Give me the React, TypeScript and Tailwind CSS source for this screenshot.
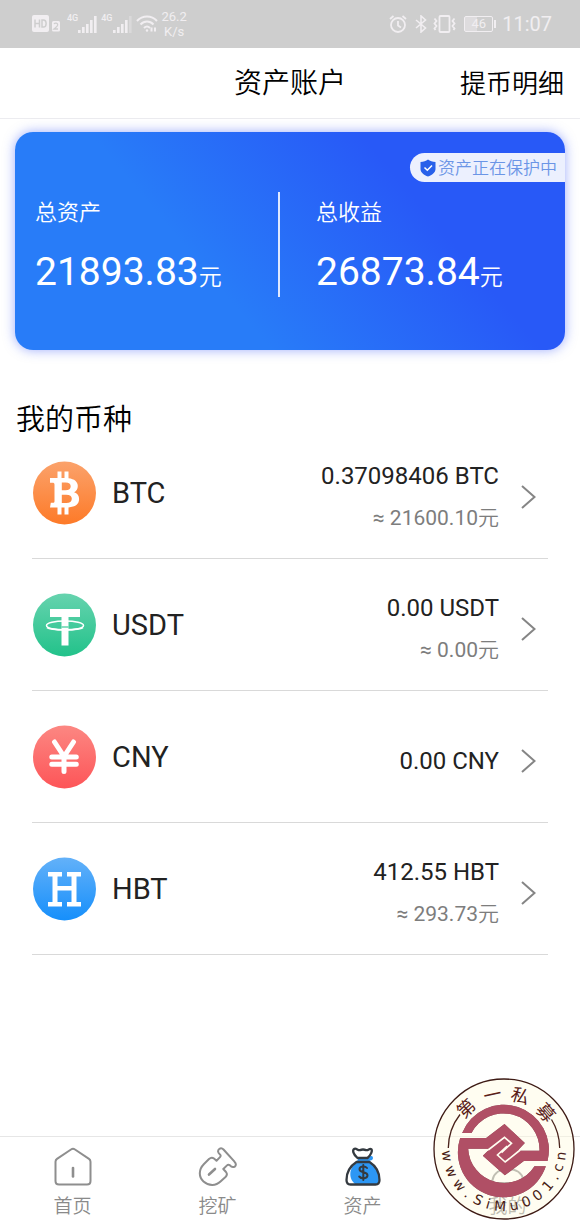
import React from "react";

type Coin = {
  name: string;
  amount: string;
  approx?: string;
  from: string;
  to: string;
  glyph: React.ReactNode;
};

const coins: Coin[] = [
  {
    name: "BTC",
    amount: "0.37098406 BTC",
    approx: "≈ 21600.10元",
    from: "#fba26b",
    to: "#fd7a28",
    glyph: (
      <path
        fill="#fff"
        fillRule="evenodd"
        d="M25.500 10.500h4V17h3v-6.500h4v6.700c6 .6 9.300 3.600 9.300 7.800 0 2.900-1.300 5-3.700 6.200 3.300 1.100 5 3.500 5 6.900 0 5.100-3.700 8-10.600 8.300V53.500h-4V46.500h-3v7h-4v-7H18l.8-4.700h2c1.200 0 1.700-.5 1.700-1.600V23.700c0-1.400-.6-2-2.100-2h-2.400V17h7.500zM29.800 21.500v7.700h3.700c3.500 0 5.200-1.300 5.200-3.900 0-2.500-1.700-3.800-5-3.800zM29.800 33.700V42h4.400c3.700 0 5.600-1.400 5.600-4.200 0-2.700-1.900-4.100-5.600-4.100z"
      />
    ),
  },
  {
    name: "USDT",
    amount: "0.00 USDT",
    approx: "≈ 0.00元",
    from: "#66d3ae",
    to: "#22c28a",
    glyph: (
      <>
        <path fill="#fff" d="M18 16h30v8H36.500v28.500h-7V24H18z" />
        <ellipse cx="33" cy="32.500" rx="18.500" ry="4.600" fill="none" stroke="#fff" strokeWidth="1.500" />
        <path d="M29.500 34h7" stroke="#3bc998" strokeWidth="1.200" />
        <path d="M15 34.500c4 3 32 3 36 0" fill="none" stroke="#fff" strokeWidth="1.600" />
      </>
    ),
  },
  {
    name: "CNY",
    amount: "0.00 CNY",
    from: "#fc8782",
    to: "#fd5558",
    glyph: (
      <path
        d="M22.500 17 32 31.500 41.500 17M32 31v15.500M19.800 32h24.500M19.800 39.300h24.500"
        fill="none"
        stroke="#fff"
        strokeWidth="5"
        strokeLinecap="round"
        strokeLinejoin="round"
      />
    ),
  },
  {
    name: "HBT",
    amount: "412.55 HBT",
    approx: "≈ 293.73元",
    from: "#63b1f9",
    to: "#168ffb",
    glyph: (
      <path
        fill="#fff"
        d="M16 15h14v4.500h-4.500v9.500h14v-9.500H35V15h14v4.500h-4.500V45H49v4.500H35V45h4.500V33.500h-14V45H30v4.500H16V45h4.500V19.500H16z"
      />
    ),
  },
];

function CoinIcon({ coin }: { coin: Coin }) {
  const id = `fill-${coin.name}`;
  return (
    <svg viewBox="0 0 64 64" className="size-16 shrink-0" aria-hidden="true">
      <defs>
        <linearGradient id={id} x1="0" y1="0" x2="0" y2="1">
          <stop offset="0" stopColor={coin.from} />
          <stop offset="1" stopColor={coin.to} />
        </linearGradient>
      </defs>
      <circle cx="32.500" cy="32" r="31.500" fill={`url(#${id})`} />
      {coin.glyph}
    </svg>
  );
}

function Bars({ last }: { last: number }) {
  return (
    <svg viewBox="0 0 19 18" className="h-[18px] w-[19px]" aria-hidden="true">
      {[3, 6, 9, 13, 17].map((h, i) => (
        <rect key={h} x={i * 4} y={18 - h} width="2.600" height={h} fill="#f1eef1" opacity={i < last ? 1 : 0.35} />
      ))}
    </svg>
  );
}

function StatusBar() {
  return (
    <div className="flex h-12 items-center justify-between bg-[#cecece] pl-8 pr-7 text-[#f1eef1]">
      <div className="flex items-center">
        <svg viewBox="0 0 29 18" className="h-[18px] w-[29px]" aria-hidden="true">
          <rect x="0" y="0" width="17" height="17" rx="2" fill="#f1eef1" />
          <path d="M3 4.500v8M7.500 4.500v8M3 8.500h4.500M10 5v7h1.500c3.500 0 3.500-7 0-7z" fill="none" stroke="#cecece" strokeWidth="1.500" />
          <rect x="20" y="6" width="8" height="10.500" rx="1.500" fill="#f1eef1" />
          <path d="M22 9c1-1.500 4-1 3.700 1-.2 1.500-2 2.500-3.700 4h4" fill="none" stroke="#cecece" strokeWidth="1.300" />
        </svg>
        <span className="ml-1.5 self-start pt-1 text-[9px] leading-[10px] font-medium">4G</span>
        <Bars last={5} />
        <span className="ml-1 self-start pt-1 text-[9px] leading-[10px] font-medium">4G</span>
        <Bars last={4} />
        <svg viewBox="0 0 22 18" className="ml-1 h-[18px] w-[22px]" fill="none" stroke="#f1eef1" strokeWidth="2" aria-hidden="true">
          <path d="M1 6c5.500-6 14.500-6 20 0M4.500 9.500c3.800-4 9.200-4 13 0M8 13c2-2 4-2 6 0" />
          <circle cx="11" cy="15.500" r="1.200" fill="#f1eef1" stroke="none" />
          <path d="M15.500 12.500v4M19 12.500v4" />
        </svg>
        <span className="ml-1 text-center text-[13px] leading-[15px]">
          26.2
          <br />
          K/s
        </span>
      </div>
      <div className="flex items-center">
        <svg viewBox="0 0 18 18" className="size-[18px]" fill="none" stroke="#f1eef1" strokeWidth="1.800" aria-hidden="true">
          <circle cx="9" cy="10" r="7" />
          <path d="M9 6v4.500l3 2M1 4l3.500-3M17 4l-3.500-3" />
        </svg>
        <svg viewBox="0 0 12 18" className="ml-2 h-[18px] w-3" fill="none" stroke="#f1eef1" strokeWidth="1.600" aria-hidden="true">
          <path d="M1 5l9.500 8L6 17V1l4.500 4L1 13" />
        </svg>
        <svg viewBox="0 0 23 18" className="ml-1.5 h-[18px] w-[23px]" fill="none" stroke="#f1eef1" strokeWidth="1.800" aria-hidden="true">
          <rect x="6.500" y="1" width="10" height="16" rx="1" />
          <path d="M1.500 3.500l2 2.500-2 2.500 2 2.500-2 2.500 1 1.500M21.500 3.500l-2 2.500 2 2.500-2 2.500 2 2.500-1 1.500" />
        </svg>
        <span className="ml-2 flex h-4 w-[29px] items-center justify-center rounded-xs border border-[#f1eef1] bg-[linear-gradient(90deg,#dedcde_46%,transparent_46%)] text-[13px] leading-4">
          46
        </span>
        <span className="ml-px h-2 w-0.5 bg-[#f1eef1]" />
        <span className="ml-1.5 text-xl leading-6">11:07</span>
      </div>
    </div>
  );
}

function Total({ label, value }: { label: string; value: string }) {
  return (
    <div>
      <p className="text-[22px] leading-8">{label}</p>
      <p className="mt-5 text-[39px] leading-[46px] whitespace-nowrap">
        {value}
        <span className="text-[23px]">元</span>
      </p>
    </div>
  );
}

const tabs = [
  {
    label: "首页",
    icon: (
      <g fill="none" stroke="#8e8e8e" strokeWidth="2" strokeLinejoin="round" strokeLinecap="round">
        <path d="M18 2.500q2-1.300 4 0l14 9.300q1.500 1 1.500 3V34q0 3.500-3.500 3.500H6q-3.500 0-3.500-3.500V14.800q0-2 1.500-3z" />
        <path d="M20 21v8.500" strokeWidth="2.600" />
      </g>
    ),
  },
  {
    label: "挖矿",
    icon: (
      <g fill="none" stroke="#8e8e8e" strokeWidth="2" strokeLinejoin="round" strokeLinecap="round">
        <path d="M21.500 1.800c-2.300 1.600-1.600 4 .5 5.700 1 .8.800 1.800 0 2.600l-3.500 3.600-2.500-2.200q-2.500-1.700-5 .5l-5 5C.500 22.500.500 30 5.500 34.500s12.500 4.500 17 0l5-4.500q2.500-2.500.5-5l-2.700-3 3.700-3.600q1.300-1.300 3 0c1.700 2 4.400 2.400 5.500.300q1-2-1-4L25.500 2.500q-2-2-4-.7z" />
        <path d="M11 27.500l6-5.500" strokeWidth="2.600" />
      </g>
    ),
  },
  {
    label: "资产",
    icon: (
      <g strokeLinejoin="round" strokeLinecap="round">
        <path d="M16 10l13-1q2 2 0 4l-3 1c6 3 10.500 12 10 20l-2 3.500H13c-8-5-7-17 0-21z" fill="#2c97f5" />
        <path d="M14.500 11C10 7 9 3 11.500 1.800c2-.8 3.500 2 5.500 1.300 2-.8 4-.8 6 0s3.500-2 5-1c2 1.200 0 6-3.500 8.900z" fill="#fff" />
        <path
          d="M14.500 11C10 7 9 3 11.500 1.800c2-.8 3.500 2 5.500 1.300 2-.8 4-.8 6 0s3.500-2 5-1c2 1.200 0 6-3.500 8.900zM13.500 15h13C32 18.500 36.500 25 36.500 33q0 4.500-4 4.500h-25q-4 0-4-4.500c0-8 4.500-14.500 10-18z"
          fill="none"
          stroke="#343a40"
          strokeWidth="2.300"
        />
        <path d="M24 21c-2-2.500-7.500-2-7.500 1.300 0 4 8 2 8 6 0 3.500-6 4-8.300 1.200M20.300 18v15" fill="none" stroke="#343a40" strokeWidth="2" />
      </g>
    ),
  },
  {
    label: "我的",
    icon: (
      <g fill="none" stroke="#8e8e8e" strokeWidth="2" strokeLinejoin="round">
        <circle cx="20" cy="10" r="7" />
        <path d="M7 36q-3 0-2.500-3C6 26 12 22 20 22s14 4 15.500 11q.5 3-2.500 3z" />
      </g>
    ),
  },
];

type Glyph = { ch: string; angle: number; advance: number };

const siteGlyphs: Glyph[] = [
  { ch: "w", angle: 173, advance: 0.818 },
  { ch: "w", angle: 157, advance: 0.818 },
  { ch: "w", angle: 141, advance: 0.818 },
  { ch: ".", angle: 129, advance: 0.318 },
  { ch: "S", angle: 117, advance: 0.635 },
  { ch: "i", angle: 106, advance: 0.278 },
  { ch: "M", angle: 94, advance: 0.863 },
  { ch: "u", angle: 80, advance: 0.634 },
  { ch: "0", angle: 67, advance: 0.636 },
  { ch: "0", angle: 54, advance: 0.636 },
  { ch: "1", angle: 40, advance: 0.636 },
  { ch: ".", angle: 29, advance: 0.318 },
  { ch: "c", angle: 19, advance: 0.55 },
  { ch: "n", angle: 7, advance: 0.634 },
];

const nameGlyphs: Glyph[] = [
  { ch: "第", angle: -133, advance: 1 },
  { ch: "一", angle: -102, advance: 1 },
  { ch: "私", angle: -73, advance: 1 },
  { ch: "募", angle: -41, advance: 1 },
];

/* Places each glyph on a circle round (71, 71), centred on its own angle. */
function ring(glyphs: Glyph[], radius: number, size: number, turn: number) {
  const spots = glyphs.map((g) => {
    const a = (g.angle * Math.PI) / 180;
    const r = ((g.angle + turn) * Math.PI) / 180;
    const half = (g.advance * size) / 2;
    return {
      x: 71 + radius * Math.cos(a) - half * Math.cos(r),
      y: 71 + radius * Math.sin(a) - half * Math.sin(r),
      rotate: g.angle + turn,
    };
  });
  return {
    x: spots.map((s) => s.x.toFixed(2)).join(" "),
    y: spots.map((s) => s.y.toFixed(2)).join(" "),
    rotate: spots.map((s) => s.rotate).join(" "),
  };
}

function Stamp() {
  return (
    <svg viewBox="0 0 142 142" className="pointer-events-none absolute right-[5px] bottom-1 size-[142px]" role="img" aria-label="第一私募">
      <defs>
        <filter id="stamp-shade" x="-10%" y="-10%" width="120%" height="120%">
          <feDropShadow dx="0" dy="0" stdDeviation="2" floodColor="#3c1018" floodOpacity="0.8" />
        </filter>
      </defs>
      <circle cx="71" cy="71" r="70" fill="#fffae0" fillOpacity="0.45" stroke="#3d1a14" strokeWidth="1.300" />
      <path d="M15.300 70A55.700 55.700 0 0 1 27 36.500M126.700 70A55.700 55.700 0 0 0 118.500 41.500" fill="none" stroke="#4a231c" strokeWidth="1.300" />
      {/* Ring and knot share one 294-unit grid centred on (145.5, 147). */}
      <g transform="translate(71 71) scale(0.3333) translate(-145.5 -147)">
        <g fill="#b04f65" filter="url(#stamp-shade)">
          <path d="M20 99A135 135 0 0 1 276 183H205L148 226L82 167L103 147L147 112L193 152H252A108 108 0 0 0 48 99Z" />
          <path d="M271 199A135 135 0 0 1 14 114H92L147 72L208 129L188 150L148 185L100 146H38A108 108 0 0 0 237 199Z" />
        </g>
        <path
          d="M98 150L147 112L168 130L138 158M194 150L149 186L126 165L155 138"
          fill="none"
          stroke="#fffdf0"
          strokeWidth="5"
        />
      </g>
      <text {...ring(nameGlyphs, 49, 18, 90)} fontSize="18" fill="#5a2018" className="font-['Noto_Sans_CJK_SC',sans-serif]">
        第一私募
      </text>
      <text {...ring(siteGlyphs, 62, 14, -90)} fontSize="14" fill="#4a1d16" className="font-['DejaVu_Sans',sans-serif]">
        www.SiMu001.cn
      </text>
    </svg>
  );
}

export default function App() {
  return (
    <div className="relative flex min-h-screen flex-col bg-white font-[Roboto,'Noto_Sans_CJK_SC_DemiLight','Noto_Sans_CJK_SC',sans-serif] text-[#222]">
      <StatusBar />
      <header className="grid h-[71px] grid-cols-[1fr_auto_1fr] items-center border-b border-[#ececf0] px-4 pt-0.5 text-black">
        <h1 className="col-start-2 text-[28px] leading-10">资产账户</h1>
        <a href="#records" className="justify-self-end text-[26px] leading-10">
          提币明细
        </a>
      </header>

      <main className="flex-1">
        <section className="relative mx-[15px] mt-[13px] flex h-[218px] rounded-[18px] bg-[linear-gradient(50deg,#287cf8_35%,#2859f7_72%)] pt-[60px] text-white shadow-[0_0_12px_rgba(60,90,250,0.5)]">
          <div className="flex-[243] pt-[5px] pl-5">
            <Total label="总资产" value="21893.83" />
          </div>
          <div className="h-[105px] w-0.5 bg-[#dfe8ff]" />
          <div className="flex-[249] pt-[5px] pl-9">
            <Total label="总收益" value="26873.84" />
          </div>
          <div className="absolute top-[21px] right-0 flex h-[29px] items-center gap-0.5 rounded-l-full bg-[#ecf0fe] pr-2 pl-2.5 text-[#6b95e6]">
            <svg viewBox="0 0 16 18" className="h-[18px] w-4" aria-hidden="true">
              <path d="M8 .5c2 1.500 4.500 2.300 7.500 2.500v7c0 3.500-3.500 6-7.500 7.500C4 16 .5 13.500.5 10V3C3.500 2.800 6 2 8 .5z" fill="#2860ea" />
              <path d="M4.500 8.500L7.300 11.300 12 6.500" fill="none" stroke="#fff" strokeWidth="1.500" />
            </svg>
            <span className="text-[17px] leading-6">资产正在保护中</span>
          </div>
        </section>

        <h2 className="mt-[49px] px-4 text-[29px] leading-[42px] text-black">我的币种</h2>
        <ul className="mx-8 -mt-3.5">
          {coins.map((coin) => (
            <li key={coin.name} className="border-b border-[#d9d9d9]">
              <button type="button" className="flex h-[131px] w-full items-center pr-3 text-left">
                <CoinIcon coin={coin} />
                <span className="ml-4 flex-1 text-[29px] leading-9">{coin.name}</span>
                <span className="flex items-center gap-[22px] pt-2">
                  <span className="flex flex-col items-end gap-2.5">
                    <span className="text-2xl leading-8">{coin.amount}</span>
                    {coin.approx && <span className="text-[21px] leading-8 text-[#7d7d7d]">{coin.approx}</span>}
                  </span>
                  <svg viewBox="0 0 15 24" className="h-6 w-[15px]" aria-hidden="true">
                    <path d="M1 1l12.500 11L1 23" fill="none" stroke="#858585" strokeWidth="2" />
                  </svg>
                </span>
              </button>
            </li>
          ))}
        </ul>
      </main>

      <nav className="grid h-[88px] grid-cols-4 border-t border-[#e6e6e6]">
        {tabs.map((tab) => (
          <a key={tab.label} href={`#${tab.label}`} className="flex flex-col items-center pt-2.5 text-[#8a8a8a]">
            <svg viewBox="0 0 40 40" className="size-10" aria-hidden="true">
              {tab.icon}
            </svg>
            <span className="mt-1.5 text-[19px] leading-7">{tab.label}</span>
          </a>
        ))}
      </nav>
      <Stamp />
    </div>
  );
}
